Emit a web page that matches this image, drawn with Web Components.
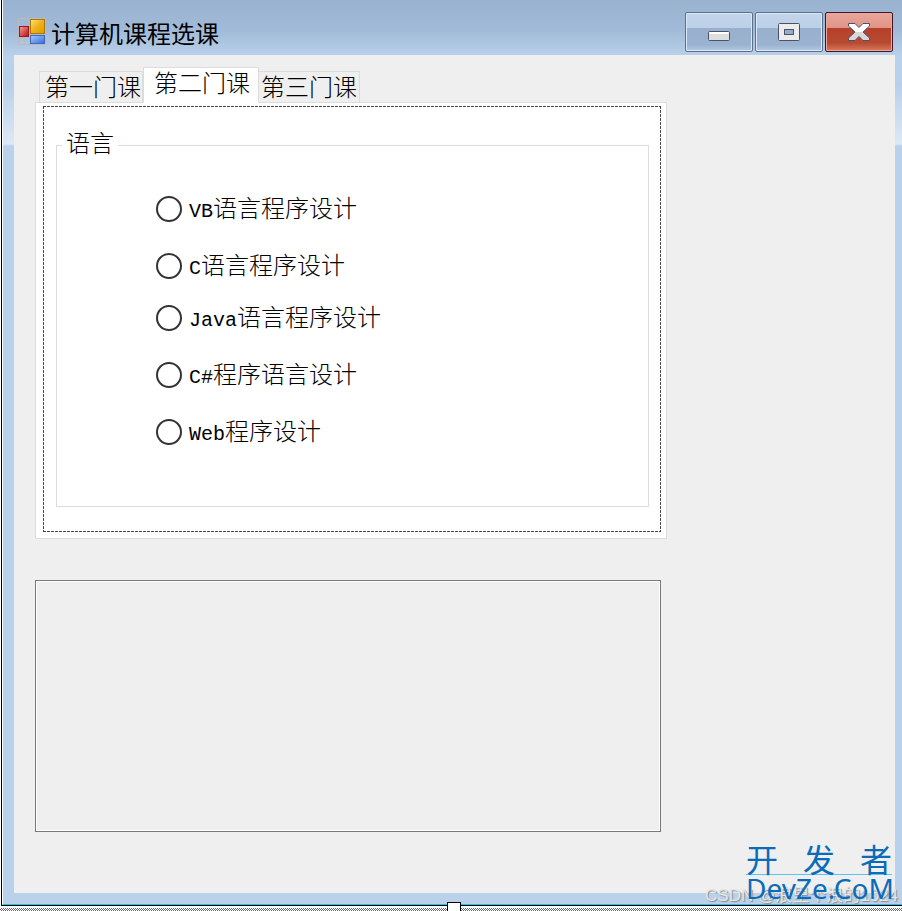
<!DOCTYPE html>
<html lang="zh-CN">
  <head>
    <meta charset="UTF-8" />
    <meta name="viewport" content="width=device-width, initial-scale=1.0" />
    <title>计算机课程选课</title>
    <style>
      body {
        margin: 0;
        background: #fff;
        color: #000;
        font-family: "Liberation Sans", "Noto Sans CJK SC", sans-serif;
        font-size: 24px;
        line-height: 28px;
      }
    </style>
  </head>
  <body>
    <designer-surface>
      <form-window caption="计算机课程选课">
        <tab-control tabs="第一门课,第二门课,第三门课" selected="1">
          <group-box slot="page-1" caption="语言">
            <radio-list
              name="language"
              options="VB语言程序设计,C语言程序设计|Java语言程序设计,C#程序语言设计,Web程序设计"
            ></radio-list>
          </group-box>
        </tab-control>
        <result-box></result-box>
      </form-window>
      <site-mark slot="mark"></site-mark>
    </designer-surface>
  </body>
  <script>
    // 设计器画布：窗体的选中边框和拖动手柄
    class DesignerSurface extends HTMLElement {
      constructor() {
        super();
        this.attachShadow({ mode: "open" });
        this.shadowRoot.innerHTML = `
          <style>
            :host {
              display: flex;
              flex-direction: column;
              position: relative;
              min-height: 100vh;
              overflow: hidden;
            }
            .frame {
              flex: 1;
              display: flex;
              margin-left: 1px;
              border-left: 1px solid #000;
              border-bottom: 1px solid #000;
            }
            .grip {
              height: 3px;
              margin-top: 2px;
              background: repeating-conic-gradient(#666 0 25%, #fff 0 50%) 0 0 / 2px 2px;
            }
            .handle {
              position: absolute;
              left: 50%;
              bottom: -4px;
              box-sizing: border-box;
              width: 14px;
              height: 13px;
              margin-left: -4px;
              border: 1px solid #000;
              background: #fff;
            }
          </style>
          <div class="frame"><slot></slot></div>
          <div class="grip"></div>
          <div class="handle"></div>
          <slot name="mark"></slot>
        `;
      }
    }

    // 窗体：标题栏和客户区
    class FormWindow extends HTMLElement {
      constructor() {
        super();
        this.attachShadow({ mode: "open" });
        this.shadowRoot.append(FormWindow.template.content.cloneNode(true));
      }
      connectedCallback() {
        this.shadowRoot.querySelector("h1").textContent = this.getAttribute("caption");
      }
    }
    FormWindow.template = document.createElement("template");
    FormWindow.template.innerHTML = `
      <style>
        :host {
          flex: 1;
          display: flex;
          flex-direction: column;
          box-sizing: border-box;
          padding: 0 7px 11px 11px;
          border-left: 1px solid #fff;
          border-bottom: 1px solid #1cc8ea;
          background:
            linear-gradient(#98b2d0 0, #a1bad7 30px, #b9d1ea 56px, #b9d0ea 85px, #dce8f5 144px, #b9d1ea 146px);
        }
        header {
          display: flex;
          align-items: center;
          height: 55px;
          padding: 0 2px 0 4px;
        }
        .logo {
          width: 28px;
          height: 28px;
          margin-top: 9px;
        }
        h1 {
          flex: 1;
          margin: 0 0 0 5px;
          padding-top: 10px;
          font: 24px/28px "Noto Sans CJK SC", sans-serif;
        }
        .buttons {
          display: flex;
          gap: 2px;
          margin-top: 9px;
        }
        button {
          display: flex;
          align-items: center;
          justify-content: center;
          box-sizing: border-box;
          width: 68px;
          height: 40px;
          padding: 0;
          border: 1px solid #5e718c;
          border-radius: 2px;
          background: linear-gradient(#c1d4ea 0, #bcd0e7 15px, #98b0cd 15px, #9bb3d0 32px, #b3cbe4 38px);
          box-shadow: inset 0 0 0 1px #dce8f5;
        }
        button.close {
          border-color: #431422;
          background: linear-gradient(#e8a79b 0, #e09486 15px, #b5402a 15px, #b84a31 30px, #d77b5f 38px);
          box-shadow: inset 0 0 0 1px #eba99c;
        }
        main {
          flex: 1;
          display: flex;
          flex-direction: column;
          gap: 41px;
          padding: 12px 21px 20px;
          background: #efefef;
        }
      </style>
      <header>
        <svg class="logo" viewBox="0 0 28 28">
          <defs>
            <linearGradient id="y" x2="1" y2="1"><stop stop-color="#ffe373"/><stop offset=".5" stop-color="#efb11b"/><stop offset="1" stop-color="#dc9a00"/></linearGradient>
            <linearGradient id="r" x2="1" y2="1"><stop stop-color="#f4a09a"/><stop offset="1" stop-color="#b40d16"/></linearGradient>
            <linearGradient id="b" x2="1" y2="1"><stop stop-color="#a9caff"/><stop offset="1" stop-color="#326be0"/></linearGradient>
          </defs>
          <path d="M.5.5H27.500V26.500H.500ZM.5 19.500H12M12 .5V27M6.500 19V27" fill="none" stroke="#b8bac0"/>
          <rect x="12.500" y="1.500" width="14" height="14" fill="url(#y)" stroke="#a97809"/>
          <rect x="1.500" y="8.500" width="9" height="10" fill="url(#r)" stroke="#a21219"/>
          <rect x="12.500" y="17.500" width="14" height="8" fill="url(#b)" stroke="#4468b0"/>
        </svg>
        <h1></h1>
        <div class="buttons">
          <button type="button" aria-label="最小化">
            <svg width="22" height="22" viewBox="0 0 22 22"><rect x=".5" y="10.500" width="21" height="9" rx="1" fill="#dedede" stroke="#4b5267"/><path d="M1.500 12H20.500" stroke="#fff" stroke-width="2"/></svg>
          </button>
          <button type="button" aria-label="最大化">
            <svg width="22" height="18" viewBox="0 0 22 18"><rect x=".5" y=".5" width="21" height="17" rx="1" fill="#ececec" stroke="#4b5267"/><rect x="6.500" y="6.500" width="9" height="5" fill="#94adcb" stroke="#4b5267"/></svg>
          </button>
          <button type="button" class="close" aria-label="关闭">
            <svg width="24" height="20" viewBox="0 0 24 20"><defs><linearGradient id="x" x2="0" y2="1"><stop offset=".5" stop-color="#fff"/><stop offset=".5" stop-color="#d8d8d8"/></linearGradient></defs><path d="M1.500 1.500H8L12 5.500 16 1.500H22.500V4L16 10 22.500 16V18.500H16L12 14.500 8 18.500H1.500V16L8 10 1.500 4Z" fill="url(#x)" stroke="#4b5267" stroke-linejoin="round"/></svg>
          </button>
        </div>
      </header>
      <main><slot></slot></main>
    `;

    // 选项卡：tabs 为逗号分隔的标题，内容放在 page-N 插槽
    class TabControl extends HTMLElement {
      constructor() {
        super();
        this.attachShadow({ mode: "open" });
        this.shadowRoot.innerHTML = `
          <style>
            :host {
              display: block;
              max-width: 632px;
            }
            nav {
              display: flex;
              align-items: flex-end;
              padding-left: 4px;
            }
            button {
              height: 32px;
              margin-bottom: -1px;
              padding: 0 2px 2px;
              border: 1px solid #dcdcdc;
              border-left-width: 0;
              background: #efefef;
              color: inherit;
              font: 300 24px/28px "Noto Sans CJK SC", sans-serif;
            }
            button:first-child {
              padding-left: 5px;
              padding-right: 1px;
              border-left-width: 1px;
            }
            button[aria-selected="true"] {
              height: 36px;
              padding: 0 8px 6px 10px;
              border-left-width: 1px;
              border-bottom-color: #fff;
              background: #fff;
              z-index: 1;
            }
            .page {
              padding: 3px 5px 6px 7px;
              border: 1px solid #dcdcdc;
              background: #fff;
            }
            .selection {
              min-height: 398px;
              padding: 21px 12px 25px 13px;
              --h: repeating-linear-gradient(90deg, #444 0 3px, transparent 3px 4px);
              --v: repeating-linear-gradient(#444 0 3px, transparent 3px 4px);
              background:
                var(--h) top / 100% 1px no-repeat,
                var(--h) bottom / 100% 1px no-repeat,
                var(--v) left / 1px 100% no-repeat,
                var(--v) right / 1px 100% no-repeat;
              box-sizing: border-box;
            }
          </style>
          <nav role="tablist"></nav>
          <div class="page" role="tabpanel"><div class="selection"><slot></slot></div></div>
        `;
      }
      connectedCallback() {
        const nav = this.shadowRoot.querySelector("nav");
        this.getAttribute("tabs").split(",").forEach((title, i) => {
          const button = document.createElement("button");
          button.type = "button";
          button.setAttribute("role", "tab");
          button.textContent = title;
          button.onclick = () => this.select(i);
          nav.append(button);
        });
        this.select(Number(this.getAttribute("selected")));
      }
      select(index) {
        this.shadowRoot.querySelectorAll("button").forEach((button, i) => {
          button.setAttribute("aria-selected", i === index);
        });
        this.shadowRoot.querySelector("slot").name = "page-" + index;
      }
    }

    // 分组框
    class GroupBox extends HTMLElement {
      constructor() {
        super();
        this.attachShadow({ mode: "open" });
        this.shadowRoot.innerHTML = `
          <style>
            :host {
              display: block;
            }
            fieldset {
              min-width: 0;
              margin: 0;
              padding: 32px 16px 60px 99px;
              border: 1px solid #dcdcdc;
            }
            legend {
              margin-left: -94px;
              padding: 0 4px 6px;
              font: 300 24px/30px "Noto Sans CJK SC", sans-serif;
            }
          </style>
          <fieldset><legend></legend><slot></slot></fieldset>
        `;
      }
      connectedCallback() {
        this.shadowRoot.querySelector("legend").textContent = this.getAttribute("caption");
      }
    }

    // 单选列表：逗号分隔选项，竖线分隔小组
    class RadioList extends HTMLElement {
      constructor() {
        super();
        this.attachShadow({ mode: "open" });
        this.shadowRoot.innerHTML = `
          <style>
            :host {
              display: flex;
              flex-direction: column;
              gap: 24px;
            }
            .set {
              display: flex;
              flex-direction: column;
              align-items: flex-start;
              gap: 29px;
            }
            label {
              display: flex;
              align-items: center;
              gap: 7px;
              height: 28px;
              font: 300 24px/28px "Noto Sans CJK SC", sans-serif;
              white-space: nowrap;
            }
            .latin {
              font: 20px/28px "Liberation Mono", monospace;
            }
            input {
              appearance: none;
              box-sizing: border-box;
              width: 26px;
              height: 26px;
              margin: 0;
              border: 2px solid #333;
              border-radius: 50%;
              background: #fff;
            }
            input:checked {
              background: radial-gradient(#333 0 6px, #fff 7px);
            }
          </style>
        `;
      }
      connectedCallback() {
        for (const group of this.getAttribute("options").split("|")) {
          const set = document.createElement("div");
          set.className = "set";
          for (const text of group.split(",")) {
            // 西文部分用等宽字体，占半个汉字宽
            const [, latin, rest] = text.match(/^([\x21-\x7e]*)(.*)$/);
            const label = document.createElement("label");
            label.innerHTML = `<input type="radio" name="${this.getAttribute("name")}" /><span><span class="latin">${latin}</span>${rest}</span>`;
            set.append(label);
          }
          this.shadowRoot.append(set);
        }
      }
    }

    // 下方的空白面板
    class ResultBox extends HTMLElement {
      constructor() {
        super();
        this.attachShadow({ mode: "open" });
        this.shadowRoot.innerHTML = `
          <style>
            :host {
              display: block;
              box-sizing: border-box;
              max-width: 626px;
              min-height: 252px;
              border: 1px solid #7a7a7a;
              box-shadow: inset 0 0 0 1px #fff;
            }
          </style>
          <slot></slot>
        `;
      }
    }

    // 右下角站点水印
    class SiteMark extends HTMLElement {
      constructor() {
        super();
        this.attachShadow({ mode: "open" });
        this.shadowRoot.innerHTML = `
          <style>
            :host {
              position: absolute;
              right: 4px;
              bottom: 4px;
              display: grid;
              justify-items: end;
              white-space: nowrap;
            }
            .author {
              grid-area: 1 / 1;
              align-self: end;
              color: #e4e7eb;
              font-size: 17px;
              line-height: 22px;
              text-shadow: 1px 1px 1px #888;
            }
            .site {
              grid-area: 1 / 1;
              width: 146px;
              margin-right: 6px;
              margin-bottom: 6px;
              z-index: 1;
              color: #0a6cb8;
            }
            .cn {
              border-bottom: 1px solid #5cc4ec;
              font: 32px/32px "Noto Sans CJK SC", sans-serif;
              text-align-last: justify;
            }
            .en {
              font: 28px/26px "Noto Sans", sans-serif;
            }
          </style>
          <div class="author">CSDN @浪里个浪的1024</div>
          <div class="site">
            <div class="cn">开 发 者</div>
            <div class="en">DevZe.CoM</div>
          </div>
        `;
      }
    }

    customElements.define("designer-surface", DesignerSurface);
    customElements.define("form-window", FormWindow);
    customElements.define("tab-control", TabControl);
    customElements.define("group-box", GroupBox);
    customElements.define("radio-list", RadioList);
    customElements.define("result-box", ResultBox);
    customElements.define("site-mark", SiteMark);
  </script>
</html>
